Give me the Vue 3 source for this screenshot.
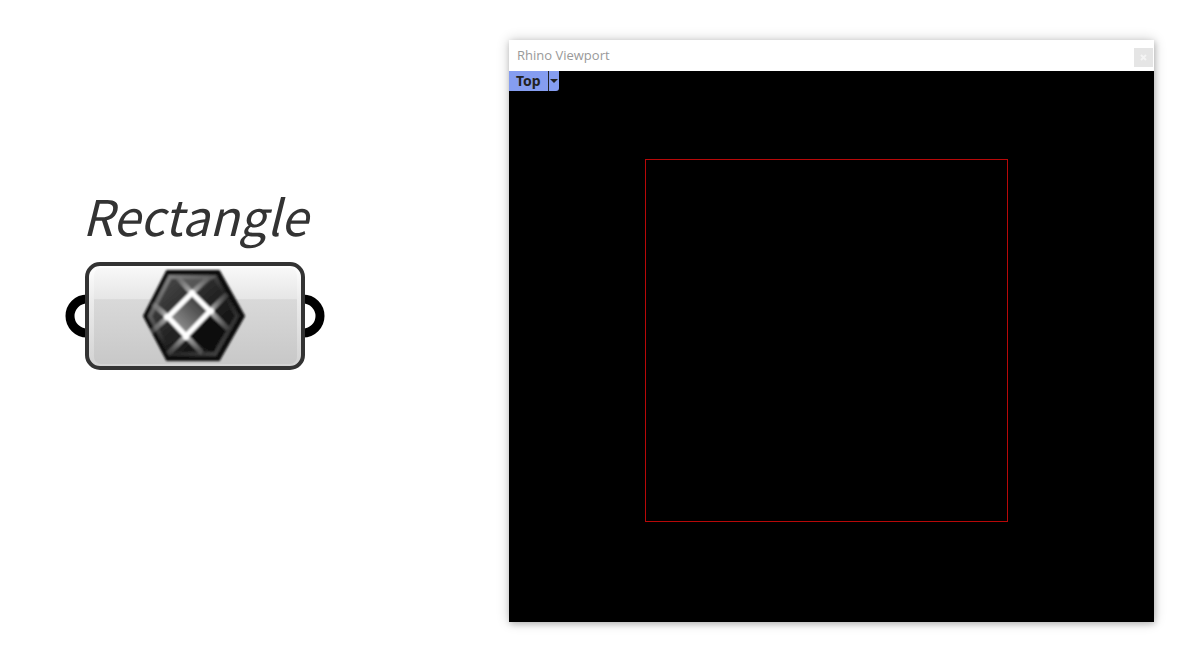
<script setup>
const title = 'Rhino Viewport'
const view = 'Top'
const component = 'Rectangle'
</script>

<template>
  <main class="page">
    <section class="canvas">
      <figure class="node">
        <figcaption class="name">{{ component }}</figcaption>
        <svg class="capsule" viewBox="0 0 260 108" role="img" aria-label="Rectangle parameter">
          <defs>
            <linearGradient id="body" x1="0" y1="0" x2="0" y2="1">
              <stop offset="0" stop-color="#f8f8f8" />
              <stop offset=".32" stop-color="#e6e6e6" />
              <stop offset=".33" stop-color="#d9d9d9" />
              <stop offset="1" stop-color="#c8c8c8" />
            </linearGradient>
            <linearGradient id="rim" x1="0" y1="0" x2="0" y2="1">
              <stop offset="0" stop-color="#fff" />
              <stop offset=".33" stop-color="#ececec" />
              <stop offset="1" stop-color="#d2d2d2" />
            </linearGradient>
            <linearGradient id="hexRim" x1="0" y1="0" x2="1" y2="1">
              <stop offset="0" stop-color="#999" />
              <stop offset=".3" stop-color="#555" />
              <stop offset=".55" stop-color="#1c1c1c" />
              <stop offset="1" stop-color="#4c4c4c" />
            </linearGradient>
            <linearGradient id="hexFill" x1="0" y1="0" x2="1" y2="1">
              <stop offset="0" stop-color="#505050" />
              <stop offset=".5" stop-color="#222" />
              <stop offset="1" stop-color="#080808" />
            </linearGradient>
            <linearGradient id="gem" x1="0" y1="1" x2="1" y2="0">
              <stop offset="0" stop-color="#aaa" />
              <stop offset=".5" stop-color="#666" />
              <stop offset="1" stop-color="#222" />
            </linearGradient>
            <radialGradient id="ray" gradientUnits="userSpaceOnUse" cx="124" cy="53" r="46">
              <stop offset=".45" stop-color="#bbb" />
              <stop offset="1" stop-color="#666" stop-opacity=".3" />
            </radialGradient>
            <filter id="soft" x="-10%" y="-10%" width="120%" height="120%">
              <feGaussianBlur stdDeviation="1" />
            </filter>
          </defs>
          <g fill="#fff" stroke="#000" stroke-width="9">
            <circle cx="22" cy="54" r="17" />
            <circle cx="238" cy="54" r="17" />
          </g>
          <rect x="22" y="2" width="216" height="104" rx="13" fill="url(#rim)" stroke="#333" stroke-width="4" />
          <rect x="29" y="6" width="203" height="96" rx="7" fill="url(#body)" />
          <g filter="url(#soft)">
            <path d="M102 9H154L179 54L154 98H102L79 54Z" fill="#111" stroke="#111" stroke-width="2" stroke-linejoin="round" />
            <path d="M105 15H150L172 54L150 92H105L85 54Z" fill="url(#hexFill)" stroke="url(#hexRim)" stroke-width="4" />
            <path d="M110 14H152L127 30Z" fill="#777" opacity=".5" />
            <path d="M120 78L145 55L161 68L146 88Z" fill="#0b0b0b" />
            <path d="M127 31L113 16M127 31L143 16M145 49L162 32M145 49L163 67M121 74L103 92M121 74L137 91M103 55L86 70M103 55L88 42" fill="none" stroke="url(#ray)" stroke-width="5" />
            <path d="M127 31L145 49L121 74L103 55Z" fill="url(#gem)" stroke="#fff" stroke-width="5" stroke-linejoin="round" />
            <g fill="#fff">
              <circle cx="127" cy="31" r="3" />
              <circle cx="146" cy="49" r="3" />
              <circle cx="121" cy="75" r="3" />
              <circle cx="102" cy="55" r="3" />
            </g>
          </g>
        </svg>
      </figure>
    </section>
    <section class="window">
      <header class="titlebar">
        <h1 class="title">{{ title }}</h1>
        <button class="close" type="button" aria-label="Close">
          <svg viewBox="0 0 19 19"><path d="M7 7L12 12M12 7L7 12" stroke="#f4f4f4" stroke-width="2" /></svg>
        </button>
      </header>
      <div class="viewport">
        <button class="view" type="button">
          <span class="view-name">{{ view }}</span>
          <svg class="arrow" viewBox="0 0 10 20"><path d="M1 8H9L5 12Z" fill="#222" /></svg>
        </button>
        <div class="drawing"></div>
      </div>
    </section>
  </main>
</template>

<style>
body {
  margin: 0;
  background: #fff;
}
</style>

<style scoped>
.page {
  box-sizing: border-box;
  min-height: 100vh;
  padding: 40px 30px 35px 0;
  display: grid;
  grid-template-columns: 509fr 645fr;
  font-family: "Open Sans", "Noto Sans", sans-serif;
}
.canvas {
  display: flex;
  align-items: flex-start;
  padding: 150px 0 0 65px;
}
.node {
  margin: 0;
  width: 260px;
}
.name {
  height: 72px;
  line-height: 50px;
  font-family: "Noto Sans CJK SC", "Open Sans", sans-serif;
  font-size: 49px;
  font-style: italic;
  text-align: center;
  color: #333;
}
.capsule {
  display: block;
  width: 100%;
}
.window {
  display: flex;
  flex-direction: column;
  background: #fff;
  box-shadow: 0 0 12px rgba(0, 0, 0, .2), 1px 2px 6px rgba(0, 0, 0, .2);
}
.titlebar {
  display: flex;
  align-items: flex-start;
  justify-content: space-between;
  height: 31px;
  padding: 0 1px 0 8px;
}
.title {
  margin: 0;
  font-size: 13px;
  font-weight: 400;
  line-height: 30px;
  color: #999;
}
.close {
  width: 19px;
  height: 19px;
  margin-top: 8px;
  padding: 0;
  border: 0;
  background: #e5e5e5;
}
.close svg {
  display: block;
}
.viewport {
  flex: 1;
  display: flex;
  flex-direction: column;
  background: #000;
}
.view {
  align-self: flex-start;
  display: flex;
  height: 20px;
  padding: 0 0 0 7px;
  border: 0;
  border-bottom-right-radius: 3px;
  background: #859df0;
  color: #222;
  font: 700 14px/20px "Noto Sans", "Open Sans", sans-serif;
}
.view-name {
  padding-right: 7px;
  border-right: 1px solid #222;
  line-height: 20px;
}
.arrow {
  width: 10px;
  height: 20px;
}
.drawing {
  width: 363px;
  max-width: 100%;
  aspect-ratio: 1;
  margin: 68px 0 0 136px;
  border: 1px solid #b80808;
  box-sizing: border-box;
}
</style>
